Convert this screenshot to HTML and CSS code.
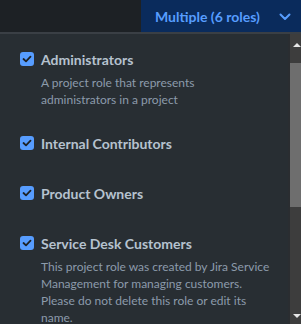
FILE: index.html
```html
<!DOCTYPE html>
<html lang="en">
<head>
    <meta charset="UTF-8">
    <title>Project roles</title>
    <link rel="stylesheet" href="styles.css">
</head>
<body>
    <div class="top-bar">
        <button class="roles-btn">
            <span>Multiple (6 roles)</span>
            <svg class="chevron" width="12" height="8" viewBox="0 0 12 8">
                <path d="M1.5 1.5 L6 6 L10.5 1.5" fill="none" stroke="#579dff" stroke-width="2" stroke-linecap="round" stroke-linejoin="round"/>
            </svg>
        </button>
    </div>
    <div class="dropdown">
        <ul class="role-list">
            <li class="role has-desc">
                <div class="role-head">
                    <span class="check"><svg width="10" height="8" viewBox="0 0 10 8"><path d="M1.5 4 L4 6.3 L8.5 1.7" fill="none" stroke="#1d2125" stroke-width="1.8" stroke-linecap="round" stroke-linejoin="round"/></svg></span>
                    <span class="role-name">Administrators</span>
                </div>
                <p class="role-desc">A project role that represents administrators in a project</p>
            </li>
            <li class="role">
                <div class="role-head">
                    <span class="check"><svg width="10" height="8" viewBox="0 0 10 8"><path d="M1.5 4 L4 6.3 L8.5 1.7" fill="none" stroke="#1d2125" stroke-width="1.8" stroke-linecap="round" stroke-linejoin="round"/></svg></span>
                    <span class="role-name">Internal Contributors</span>
                </div>
            </li>
            <li class="role">
                <div class="role-head">
                    <span class="check"><svg width="10" height="8" viewBox="0 0 10 8"><path d="M1.5 4 L4 6.3 L8.5 1.7" fill="none" stroke="#1d2125" stroke-width="1.8" stroke-linecap="round" stroke-linejoin="round"/></svg></span>
                    <span class="role-name">Product Owners</span>
                </div>
            </li>
            <li class="role has-desc">
                <div class="role-head">
                    <span class="check"><svg width="10" height="8" viewBox="0 0 10 8"><path d="M1.5 4 L4 6.3 L8.5 1.7" fill="none" stroke="#1d2125" stroke-width="1.8" stroke-linecap="round" stroke-linejoin="round"/></svg></span>
                    <span class="role-name">Service Desk Customers</span>
                </div>
                <p class="role-desc">This project role was created by Jira Service Management for managing customers. Please do not delete this role or edit its name.</p>
            </li>
        </ul>
        <div class="scrollbar">
            <span class="arrow up"></span>
            <div class="thumb"></div>
            <span class="arrow down"></span>
        </div>
    </div>
</body>
</html>
```

FILE: styles.css
```css
body {
    margin: 0;
    width: 301px;
    height: 324px;
    overflow: hidden;
    background: #282e33;
    font-family: Lato, "Liberation Sans", Arial, sans-serif;
}
.top-bar {
    display: flex;
    justify-content: flex-end;
    height: 32px;
    background: #1d2125;
    border-bottom: 2px solid #3a3f45;
}
.roles-btn {
    display: flex;
    align-items: center;
    justify-content: space-between;
    width: 160px;
    height: 32px;
    padding: 0 10px 0 14px;
    border: none;
    background: #0a2b5c;
    color: #579dff;
    font-family: inherit;
    font-size: 14px;
    font-weight: 700;
    white-space: nowrap;
    box-sizing: border-box;
    cursor: pointer;
}
.chevron {
    margin-top: 2px;
}
/* panel with roles */
.dropdown {
    display: flex;
    height: 290px;
    overflow: hidden;
}
.role-list {
    flex: 1;
    list-style: none;
    margin: 0;
    padding: 15px 0 0 0;
}
.role {
    padding: 0 0 30px 20px;
}
.role.has-desc {
    padding-bottom: 25px;
}
.role-head {
    display: flex;
    align-items: center;
    gap: 7px;
    height: 20px;
}
.check {
    display: flex;
    align-items: center;
    justify-content: center;
    width: 14px;
    height: 14px;
    border-radius: 3px;
    background: #579dff;
}
.role-name {
    color: #b6c2cf;
    font-size: 14px;
    font-weight: 700;
}
.role-desc {
    margin: 5px 17px 0 21px;
    color: #8c9bab;
    font-size: 12px;
    line-height: 17px;
}
/* scrollbar */
.scrollbar {
    position: relative;
    width: 11px;
    background: #3d3d3d;
    border-left: 2px solid #2a2d31;
}
.thumb {
    margin: 29px 0 0 0;
    height: 144px;
    background: #6e6e6e;
}
.arrow {
    position: absolute;
    left: 3px;
    width: 0;
    height: 0;
    border-left: 4px solid transparent;
    border-right: 4px solid transparent;
}
.arrow.up {
    top: 9px;
    border-bottom: 4px solid #e6e6e6;
}
.arrow.down {
    bottom: 6px;
    border-top: 4px solid #e6e6e6;
}
```
